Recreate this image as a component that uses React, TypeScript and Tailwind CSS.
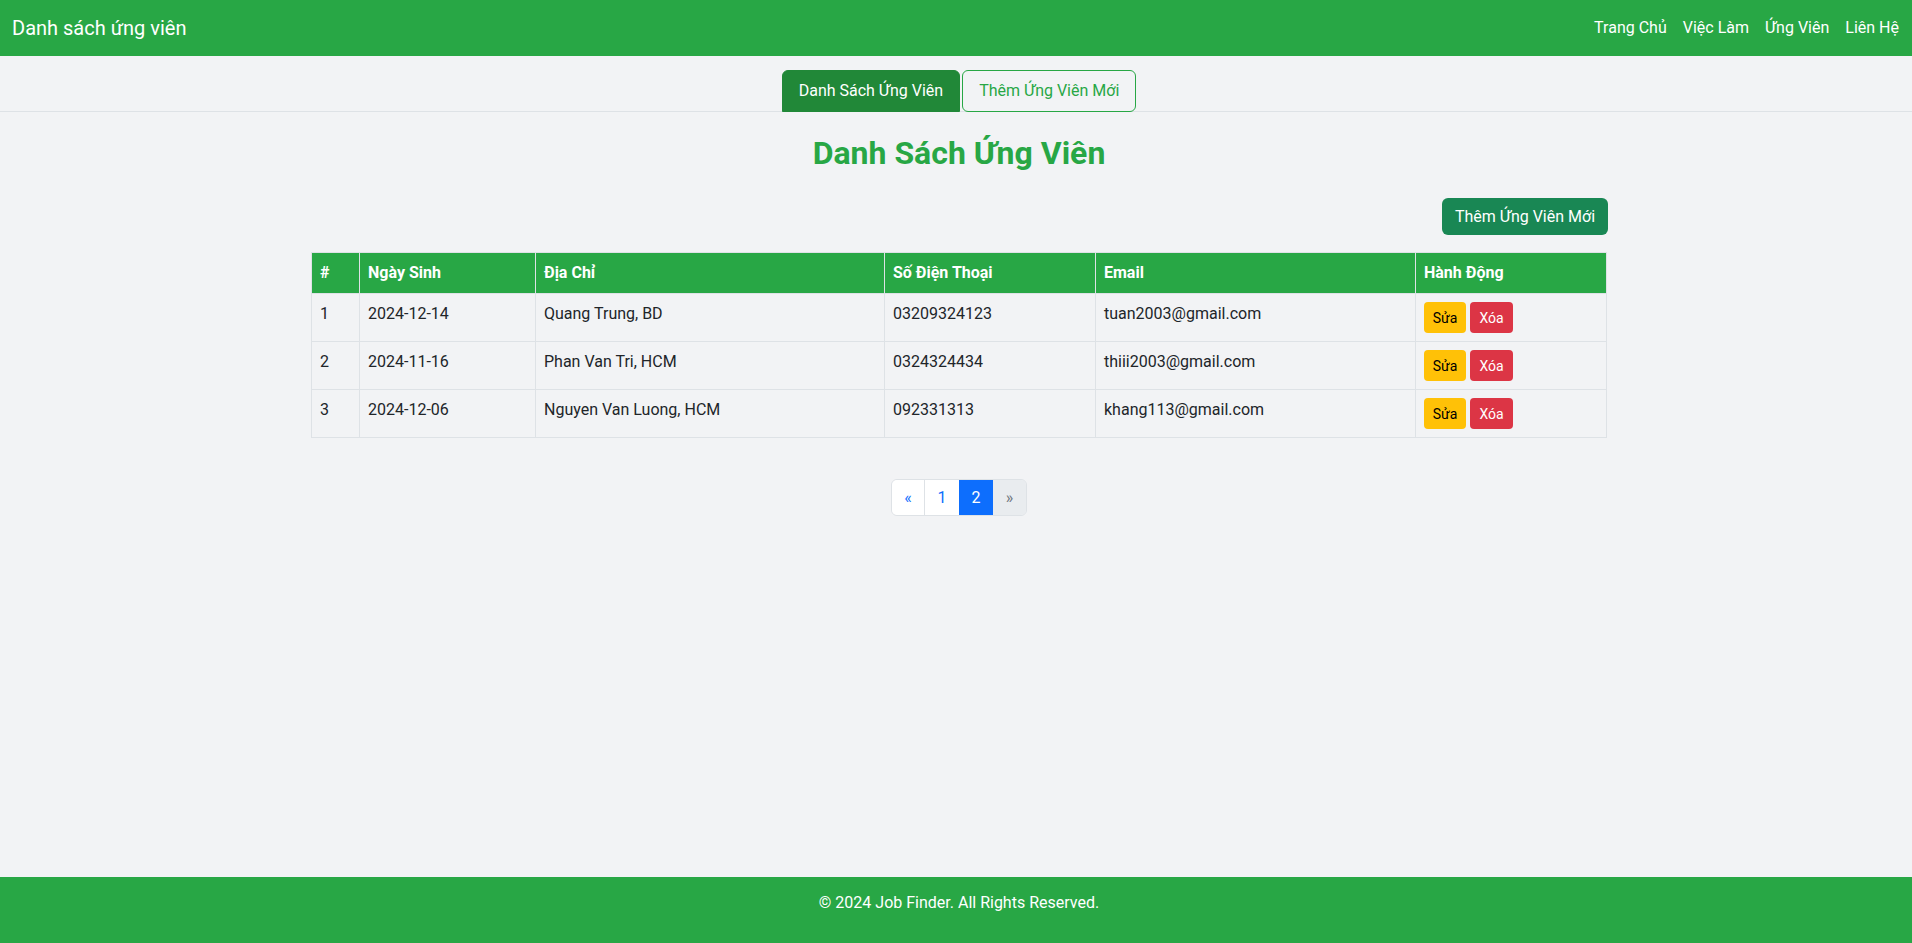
import React from 'react'

const candidates = [
  { id: 1, dob: '2024-12-14', address: 'Quang Trung, BD', phone: '03209324123', email: 'tuan2003@gmail.com' },
  { id: 2, dob: '2024-11-16', address: 'Phan Van Tri, HCM', phone: '0324324434', email: 'thiii2003@gmail.com' },
  { id: 3, dob: '2024-12-06', address: 'Nguyen Van Luong, HCM', phone: '092331313', email: 'khang113@gmail.com' },
]

function Header() {
  return (
    <header className="h-14 bg-[#28a745] flex items-center justify-between pl-3 pr-[13px]">
      <span className="text-[20px] text-white">Danh sách ứng viên</span>
      <nav className="flex items-center gap-4 text-base text-white">
        <a href="#">Trang Chủ</a>
        <a href="#">Việc Làm</a>
        <a href="#">Ứng Viên</a>
        <a href="#">Liên Hệ</a>
      </nav>
    </header>
  )
}

function Tabs() {
  return (
    <div className="mt-[14px] border-b border-[#dee2e6] pl-[6px]">
      <div className="flex justify-center gap-[2px] -mb-px">
        <button className="h-[42px] px-4 rounded-t-md border border-[#218838] bg-[#218838] text-white text-base">
          Danh Sách Ứng Viên
        </button>
        <button className="h-[42px] px-4 rounded-md border border-[#28a745] text-[#28a745] text-base">
          Thêm Ứng Viên Mới
        </button>
      </div>
    </div>
  )
}

function CandidateTable() {
  const th = 'px-2 py-2 text-left font-bold border border-[#dee2e6]'
  const td = 'px-2 py-2 align-top border border-[#dee2e6]'
  return (
    <table className="w-full table-fixed border-collapse text-base text-[#212529]">
      <thead className="bg-[#28a745] text-white">
        <tr>
          <th className={`${th} w-[48px]`}>#</th>
          <th className={`${th} w-[176px]`}>Ngày Sinh</th>
          <th className={`${th} w-[349px]`}>Địa Chỉ</th>
          <th className={`${th} w-[211px]`}>Số Điện Thoại</th>
          <th className={`${th} w-[320px]`}>Email</th>
          <th className={th}>Hành Động</th>
        </tr>
      </thead>
      <tbody>
        {candidates.map((c) => (
          <tr key={c.id}>
            <td className={td}>{c.id}</td>
            <td className={td}>{c.dob}</td>
            <td className={td}>{c.address}</td>
            <td className={td}>{c.phone}</td>
            <td className={td}>{c.email}</td>
            <td className={td}>
              <div className="flex gap-1">
                <button className="h-[31px] w-[42px] rounded text-sm bg-[#ffc107] text-black">Sửa</button>
                <button className="h-[31px] w-[43px] rounded text-sm bg-[#dc3545] text-white">Xóa</button>
              </div>
            </td>
          </tr>
        ))}
      </tbody>
    </table>
  )
}

function Pagination() {
  return (
    <div className="flex justify-center mt-[41px]">
      <div className="flex h-[37px] rounded-md border border-[#dee2e6] overflow-hidden text-base">
        <a href="#" className="w-[33px] flex items-center justify-center bg-white text-[#0d6efd] border-r border-[#dee2e6]">«</a>
        <a href="#" className="w-[34px] flex items-center justify-center bg-white text-[#0d6efd]">1</a>
        <a href="#" className="w-[34px] flex items-center justify-center bg-[#0d6efd] text-white">2</a>
        <span className="w-[33px] flex items-center justify-center bg-[#e9ecef] text-[#6c757d]">»</span>
      </div>
    </div>
  )
}

export default function App() {
  return (
    <div className="min-h-screen flex flex-col bg-[#f2f3f5] font-['Roboto',sans-serif]">
      <Header />
      <Tabs />
      <main className="flex-1 pl-[6px]">
        <div className="w-[1296px] mx-auto">
          <h2 className="mt-[22px] text-center text-[32px] leading-[1.2] font-bold text-[#28a745]">
            Danh Sách Ứng Viên
          </h2>
          <div className="flex justify-end mt-[26px] mb-[17px] -mr-px">
            <button className="h-[37px] w-[166px] rounded-md bg-[#198754] text-white text-base">Thêm Ứng Viên Mới</button>
          </div>
          <CandidateTable />
          <Pagination />
        </div>
      </main>
      <footer className="h-[66px] bg-[#28a745] text-white text-base text-center pt-[14px] pl-[6px]">
        © 2024 Job Finder. All Rights Reserved.
      </footer>
    </div>
  )
}
